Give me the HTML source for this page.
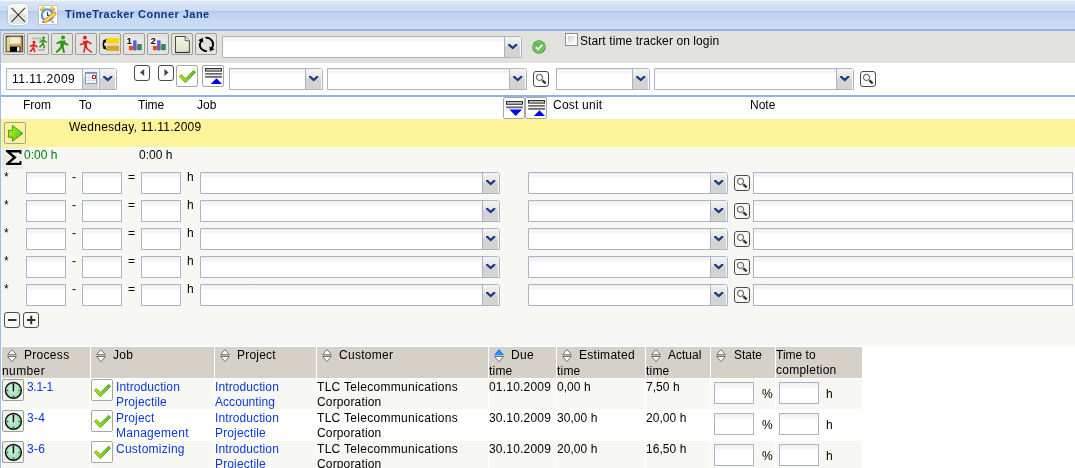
<!DOCTYPE html>
<html><head><meta charset="utf-8"><title>TimeTracker</title>
<style>
html,body{margin:0;padding:0;}
body{width:1075px;height:468px;overflow:hidden;position:relative;background:#fff;font-family:"Liberation Sans",sans-serif;font-size:12px;color:#000;}
.a{position:absolute;}
.t{position:absolute;white-space:nowrap;line-height:14px;height:14px;will-change:transform;}
.lk{color:#0a3adc;}
svg{position:absolute;overflow:visible;}
.btn{position:absolute;width:20px;height:20px;border:1px solid #9f9f9b;border-radius:2px;background:#e3e3df;}
.wbtn{position:absolute;width:20px;height:20px;border:1px solid #a6a6a2;border-radius:2px;background:#fff;}
.sbtn{position:absolute;width:14px;height:14px;border:1px solid #4a4a4a;border-radius:3px;background:#fff;}
.inp{position:absolute;height:22px;border:1px solid #aeb2c9;background:linear-gradient(#ececea 0,#f4f4f2 1px,#f5f5f3 4px,#fff 5px);box-sizing:border-box;}
.cmb{position:absolute;height:22px;border:1px solid #aeb2c9;background:linear-gradient(#ececea 0,#f4f4f2 1px,#f5f5f3 4px,#fff 5px);box-sizing:border-box;border-top-right-radius:3px;}
.cmb i{position:absolute;right:0;top:0;bottom:0;width:16px;border-left:1px solid #aeb2c9;border-top-right-radius:2px;box-shadow:inset -1px 0 0 #f8f8f7;background:linear-gradient(#f4f4f2 0,#e4e4e2 9px,#d2d2d0 10px,#d5d5d3 100%);}
.cmb i svg{left:2.8px;top:7px;}
.th{position:absolute;top:347px;height:31px;background:#d5d1c9;}
.r1{position:absolute;height:30px;background:#f7f7f3;}
</style></head><body>
<div class="a" style="left:0;top:0;width:1075px;height:29px;background:linear-gradient(#f1f6fc 0,#f1f6fc 1px,#dce7f7 1px,#d4e1f5 6px,#ccdcf3 11px,#a9c5eb 11px,#a9c5eb 12px,#b9d0ee 12px,#c8d9f2 21px,#cdddf3 29px);"></div>
<div class="a" style="left:0;top:29px;width:1075px;height:2px;background:#8fb5e6;"></div>
<div class="a" style="left:0;top:31px;width:1px;height:437px;background:#9dbdea;"></div>
<div class="a" style="left:1px;top:31px;width:1074px;height:32px;background:#e1e1dd;"></div>
<div class="a" style="left:1px;top:95px;width:1074px;height:2px;background:#8fb5e6;"></div>
<div class="a" style="left:1px;top:119px;width:1074px;height:28px;background:#fdf398;"></div>
<div class="a" style="left:1px;top:147px;width:1074px;height:199px;background:#f7f7f3;"></div>
<div class="a" style="left:8px;top:4px;width:18px;height:19px;border:1px solid #fcfcfc;border-radius:4px;background:linear-gradient(#f6f6f3 0,#f6f6f3 48%,#e3e3df 48%,#e3e3df 100%);box-shadow:0 0 0 1px rgba(160,180,210,.35);"><svg width="18" height="19" style="left:0;top:0"><path d="M2.5 2.8 L16 16.8 M16 2.8 L2.5 16.8" stroke="#333" stroke-width="1.1" fill="none"/></svg></div>
<div class="a" style="left:38px;top:5px;width:18px;height:18px;border:1px solid #c4c4c0;background:#fff;"><svg width="18" height="18" viewBox="0 0 18 18" style="left:0;top:0"><ellipse cx="3.5" cy="2.9" rx="2.9" ry="1.7" transform="rotate(-35 3.5 2.9)" fill="#f2b51c"/><ellipse cx="13.8" cy="2.7" rx="2.9" ry="1.7" transform="rotate(35 13.8 2.7)" fill="#f2b51c"/><path d="M2.2 3.2 L4.6 1.6 M12.8 1.6 L15 3.2" stroke="#fbe27a" stroke-width="0.8"/><circle cx="8.5" cy="9" r="6.7" fill="#4d8fdb"/><circle cx="8.5" cy="8.6" r="5.6" fill="#7ab2ec" opacity=".6"/><circle cx="8.3" cy="9" r="4.3" fill="#f6f9fd"/><path d="M8.5 6 V9.4 H10.8" stroke="#39445a" stroke-width="1.1" fill="none"/><path d="M3.2 16.6 L4.4 15 M14.2 16.6 L13 15" stroke="#666" stroke-width="1.1"/><path d="M6.4 14.9 L15.6 7.7" stroke="#e48f1a" stroke-width="4" stroke-linecap="round"/><path d="M6.6 14.7 L15.4 7.8" stroke="#fcd95a" stroke-width="2.2" stroke-linecap="round"/><path d="M7 14.2 L15 8" stroke="#fff4c0" stroke-width="0.7" stroke-dasharray="1.2 1"/><path d="M4.4 16.4 L5.2 13.6 L7.4 16 Z" fill="#f0c88c"/><path d="M4.2 16.6 L4.7 15.2 L5.8 16.3 Z" fill="#4a3018"/></svg></div>
<div class="t" style="left:65px;top:7px;font-weight:bold;font-size:11px;color:#0e3686;letter-spacing:0.45px;line-height:14px;">TimeTracker Conner Jane</div>
<div class="btn" style="left:3px;top:33px;"><svg width="17" height="17" viewBox="0 0 17 17" style="left:2px;top:2px;"><rect x="0.4" y="0.4" width="16.2" height="15.4" fill="#cda65c"/><rect x="0.4" y="0.4" width="3" height="15.4" fill="#e6cf96"/><rect x="14.2" y="0.4" width="2.4" height="15.4" fill="#b98f45"/><rect x="0.1" y="0.1" width="16.6" height="15.7" fill="none" stroke="#3f3522" stroke-width="0.9"/><rect x="0.4" y="0.2" width="16" height="0.9" fill="#2a2418"/><rect x="2.6" y="0.9" width="12.2" height="7.3" fill="#fbfaf0"/><rect x="3.4" y="0.9" width="11" height="7.1" fill="#f4efc6" stroke="#9a9a86" stroke-width="0.5"/><rect x="4" y="10.6" width="10.4" height="5.1" fill="#000"/><rect x="11.1" y="11.1" width="2.4" height="4.1" fill="#fff"/><rect x="0.8" y="14" width="1.4" height="1.4" fill="#f0b020"/><rect x="15" y="14" width="1.2" height="1.4" fill="#f09a20"/></svg></div>
<div class="btn" style="left:27px;top:33px;"><svg width="17" height="17" viewBox="0 0 17 17" style="left:2px;top:2px;"><path d="M1.9 2.4 H10.6 V4.8 M7.6 14 H13.7 V11" stroke="#b9b9b9" stroke-width="1.8" fill="none"/><g transform="translate(7.7,0.6) scale(0.66)" stroke="#3c9a1c" fill="none" stroke-width="2.5" stroke-linecap="round" stroke-linejoin="round"><circle cx="9" cy="1.8" r="2.1" fill="#3c9a1c" stroke="none"/><path d="M8.6 4.4 L8 10 M8.4 5.6 L3.6 8 M8.6 5.6 L13.2 8.4 M8 10 L6 13 L3.4 15.6 M8 10 L10 16"/></g><g transform="translate(-1.9,5.0) scale(0.66)" stroke="#e02424" fill="none" stroke-width="2.5" stroke-linecap="round" stroke-linejoin="round"><circle cx="9" cy="1.8" r="2.1" fill="#e02424" stroke="none"/><path d="M8.6 4.4 L8 10 M8.4 5.6 L3.6 8 M8.6 5.6 L13.2 8.4 M8 10 L6 13 L3.4 15.6 M8 10 L10 16"/></g></svg></div>
<div class="btn" style="left:51px;top:33px;"><svg width="17" height="17" viewBox="0 0 17 17" style="left:2px;top:2px;"><g stroke="#2f9612" fill="none" stroke-width="2" stroke-linecap="round" stroke-linejoin="round"><circle cx="9" cy="1.6" r="2" fill="#2f9612" stroke="none"/><path d="M6.6 5.2 L10.6 5 L9 10.6 L7.2 10.2 Z" fill="#2f9612" stroke-width="0.8"/><path d="M6.8 5.6 L3.4 7.2 M10.2 5.4 L11.2 8 L13.4 8.5 M7.8 10 L5.9 13 L2.8 15.7 M8.5 10 L9.9 16"/></g></svg></div>
<div class="btn" style="left:75px;top:33px;"><svg width="17" height="17" viewBox="0 0 17 17" style="left:2px;top:2px;"><g stroke="#e01c1c" fill="none" stroke-width="1.6" stroke-linecap="round" stroke-linejoin="round"><circle cx="6.9" cy="1.6" r="1.9" fill="#e01c1c" stroke="none"/><path d="M5.9 5.4 L9.5 5 L8.2 10 L7 10 Z" fill="#e01c1c" stroke-width="0.8"/><path d="M6 5.6 L5.3 7.8 L2.4 8.5 M9 5.2 L13 7.6 M7.4 9.4 L5.9 16.2 M7.9 9.6 L9.3 13 L13.4 16" stroke-width="1.5"/></g></svg></div>
<div class="btn" style="left:99px;top:33px;"><svg width="17" height="17" viewBox="0 0 17 17" style="left:2px;top:2px;"><rect x="4" y="1.2" width="13.2" height="14.1" fill="#dfe3ef"/><rect x="4.8" y="1.9" width="12.3" height="5.5" fill="#ffd700"/><rect x="4.8" y="9.7" width="12.3" height="5.2" fill="#daa520"/><path d="M2.2 5.6 Q0.2 8.4 2.2 11.2" stroke="#000" stroke-width="1.4" fill="none"/><path d="M0.4 4.9 L4.6 2.8 L3.4 7 Z M0.4 11.9 L4.6 14 L3.4 9.8 Z" fill="#000"/></svg></div>
<div class="btn" style="left:123px;top:33px;"><svg width="17" height="17" viewBox="0 0 17 17" style="left:2px;top:2px;"><rect x="1.5" y="1.5" width="15" height="14" fill="#eceef0" opacity=".55"/><rect x="2.9" y="9.9" width="4" height="4.4" fill="#ff4500"/><rect x="7.1" y="4.2" width="3.5" height="10.4" rx="0.8" fill="#6a5acd"/><rect x="11.1" y="8.1" width="4.7" height="6.2" rx="0.8" fill="#2e8b57"/><text x="0.4" y="7.7" font-family="Liberation Sans" font-weight="bold" font-size="9.6" fill="#000" stroke="#fff" stroke-width="1.8" paint-order="stroke">1</text></svg></div>
<div class="btn" style="left:147px;top:33px;"><svg width="17" height="17" viewBox="0 0 17 17" style="left:2px;top:2px;"><rect x="1.5" y="1.5" width="15" height="14" fill="#eceef0" opacity=".55"/><rect x="2.9" y="9.9" width="4" height="4.4" fill="#ff4500"/><rect x="7.1" y="4.2" width="3.5" height="10.4" rx="0.8" fill="#6a5acd"/><rect x="11.1" y="8.1" width="4.7" height="6.2" rx="0.8" fill="#2e8b57"/><text x="0.4" y="7.7" font-family="Liberation Sans" font-weight="bold" font-size="9.6" fill="#000" stroke="#fff" stroke-width="1.8" paint-order="stroke">2</text></svg></div>
<div class="btn" style="left:171px;top:33px;"><svg width="17" height="17" viewBox="0 0 17 17" style="left:2px;top:2px;"><defs><linearGradient id="gp" x1="0" y1="0" x2="0" y2="1"><stop offset="0" stop-color="#f5f5e8"/><stop offset="1" stop-color="#dfdfc6"/></linearGradient></defs><path d="M1.5 0.5 H11.2 L15.4 4.7 V16.4 H1.5 Z" fill="url(#gp)" stroke="#34382c" stroke-width="0.9"/><path d="M1.1 16.6 H15.8" stroke="#222" stroke-width="0.8"/><path d="M11.2 0.5 V4.7 H15.4" fill="#f8f8ea" stroke="#34382c" stroke-width="0.8"/></svg></div>
<div class="btn" style="left:195px;top:33px;"><svg width="17" height="17" viewBox="0 0 17 17" style="left:2px;top:2px;"><path d="M3.6 4.6 Q0.2 9 3.2 12.6 Q5.2 14.8 8.2 15.2" stroke="#000" stroke-width="1.9" fill="none" stroke-linecap="round"/><path d="M8.2 1.6 Q12 1.6 14.2 5 Q16 8.6 14 12" stroke="#000" stroke-width="1.9" fill="none" stroke-linecap="round"/><path d="M0.1 4.3 L4.8 1.8 L5.3 6.6 Z" fill="#000"/><path d="M11.4 10.5 L16.6 13.2 L11.9 15.3 Z" fill="#000"/></svg></div>
<div class="cmb" style="left:222px;top:36px;width:300px;"><i><svg width="10" height="6" viewBox="0 0 10 6"><path d="M0 0 H1.9 L4.7 2.5 L7.5 0 H9.4 V1.3 L4.7 5.4 L0 1.3 Z" fill="#1b3789"/></svg></i></div>
<svg width="14" height="14" viewBox="0 0 14 14" style="left:532px;top:40px;"><circle cx="7" cy="7" r="6.7" fill="#36a226"/><circle cx="7" cy="7" r="5.3" fill="#64ba54" stroke="#9fd893" stroke-width="0.8"/><path d="M3.9 7.2 L6.1 9.3 L10.2 4.9" stroke="#fff" stroke-width="1.9" fill="none"/></svg>
<div class="a" style="left:565px;top:33px;width:11px;height:11px;border:1px solid #8b8e92;background:linear-gradient(135deg,#cdd0d6 15%,#e6e7e9 50%,#f8f8f8 85%);box-shadow:inset 0 0 0 2px #fbfbfa;"></div>
<div class="t" style="left:580px;top:34px;letter-spacing:0.09px;">Start time tracker on login</div>
<div class="inp" style="left:6px;top:68px;width:111px;border-top-right-radius:3px;"></div>
<div class="t" style="left:11.5px;top:72px;letter-spacing:0.5px;">11.11.2009</div>
<div class="a" style="left:82px;top:69px;width:16px;height:20px;border-left:1px solid #aeb2c9;border-top-right-radius:2px;box-shadow:inset -1px 0 0 #fbfbfa;background:linear-gradient(#f4f4f2 0,#e4e4e2 9px,#d2d2d0 10px,#d5d5d3 100%);"></div>
<svg width="12" height="12" viewBox="0 0 12 12" style="left:85px;top:72px;"><rect x="0.5" y="0.5" width="11" height="11" fill="#fff" stroke="#7f9cc8" stroke-width="1"/><rect x="0" y="0" width="12" height="1.8" fill="#6a90cc"/><path d="M4 2.4 V11 M7.6 2.4 V11 M1 5.4 H11 M1 8.4 H11" stroke="#d0d4dc" stroke-width="0.9"/><circle cx="9" cy="5" r="1.7" fill="#fff" stroke="#a0141e" stroke-width="1.1"/></svg>
<div class="a" style="left:99px;top:69px;width:16px;height:20px;border-left:1px solid #aeb2c9;border-top-right-radius:2px;box-shadow:inset -1px 0 0 #f8f8f7;background:linear-gradient(#f4f4f2 0,#e4e4e2 9px,#d2d2d0 10px,#d5d5d3 100%);"><svg style="left:2.8px;top:7px" width="10" height="6" viewBox="0 0 10 6"><path d="M0 0 H1.9 L4.7 2.5 L7.5 0 H9.4 V1.3 L4.7 5.4 L0 1.3 Z" fill="#1b3789"/></svg></div>
<div class="sbtn" style="left:134px;top:65px;"><svg width="14" height="14" style="left:0;top:0"><path d="M9.2 3 V10 L5 6.5 Z" fill="#4a4a4a"/></svg></div>
<div class="sbtn" style="left:158px;top:65px;"><svg width="14" height="14" style="left:0;top:0"><path d="M5.4 3 V10 L9.6 6.5 Z" fill="#4a4a4a"/></svg></div>
<div class="wbtn" style="left:176px;top:65px;"><svg width="16" height="16" viewBox="0 0 16 16" style="left:2px;top:2px;"><defs><linearGradient id="gk" x1="0" y1="0" x2="1" y2="0"><stop offset="0" stop-color="#b6e404"/><stop offset="0.5" stop-color="#7fd022"/><stop offset="1" stop-color="#4fbe30"/></linearGradient></defs><path d="M0.3 8.4 L2.2 6.6 L6.4 10.4 L14.7 2.2 L16.7 4.2 L6.4 14.8 Z" fill="url(#gk)" stroke="#55a018" stroke-width="0.8" stroke-linejoin="round"/></svg></div>
<div class="wbtn" style="left:202px;top:65px;"><svg width="20" height="20" viewBox="0 0 20 20" style="left:0;top:0;"><rect x="2.5" y="2.5" width="16" height="2.6" fill="#c4c4c4" stroke="#2c2c2c" stroke-width="1"/><rect x="2.2" y="7" width="16.8" height="1.7" fill="#6a6a6a"/><rect x="2.2" y="9.9" width="16.8" height="1.9" fill="#6a6a6a"/><path d="M7.8 17.9 L13.5 12.3 L19 17.9 Z" fill="#0000ff"/></svg></div>
<div class="cmb" style="left:229px;top:68px;width:94px;"><i><svg width="10" height="6" viewBox="0 0 10 6"><path d="M0 0 H1.9 L4.7 2.5 L7.5 0 H9.4 V1.3 L4.7 5.4 L0 1.3 Z" fill="#1b3789"/></svg></i></div>
<div class="cmb" style="left:327px;top:68px;width:200px;"><i><svg width="10" height="6" viewBox="0 0 10 6"><path d="M0 0 H1.9 L4.7 2.5 L7.5 0 H9.4 V1.3 L4.7 5.4 L0 1.3 Z" fill="#1b3789"/></svg></i></div>
<div class="sbtn" style="left:533px;top:71px;background:#fff;"><svg width="14" height="14" viewBox="0 0 14 14" style="left:0;top:0"><circle cx="5.5" cy="5.4" r="3.1" fill="none" stroke="#444" stroke-width="1"/><path d="M8.3 8.3 L11.7 11.3" stroke="#333" stroke-width="2.3"/></svg></div>
<div class="cmb" style="left:556px;top:68px;width:94px;"><i><svg width="10" height="6" viewBox="0 0 10 6"><path d="M0 0 H1.9 L4.7 2.5 L7.5 0 H9.4 V1.3 L4.7 5.4 L0 1.3 Z" fill="#1b3789"/></svg></i></div>
<div class="cmb" style="left:654px;top:68px;width:200px;"><i><svg width="10" height="6" viewBox="0 0 10 6"><path d="M0 0 H1.9 L4.7 2.5 L7.5 0 H9.4 V1.3 L4.7 5.4 L0 1.3 Z" fill="#1b3789"/></svg></i></div>
<div class="sbtn" style="left:860px;top:71px;background:#fff;"><svg width="14" height="14" viewBox="0 0 14 14" style="left:0;top:0"><circle cx="5.5" cy="5.4" r="3.1" fill="none" stroke="#444" stroke-width="1"/><path d="M8.3 8.3 L11.7 11.3" stroke="#333" stroke-width="2.3"/></svg></div>
<div class="t" style="left:23px;top:98px;letter-spacing:0px;">From</div>
<div class="t" style="left:79px;top:98px;letter-spacing:0px;">To</div>
<div class="t" style="left:138px;top:98px;letter-spacing:0px;">Time</div>
<div class="t" style="left:197px;top:98px;letter-spacing:0px;">Job</div>
<div class="t" style="left:553px;top:98px;letter-spacing:0.22px;">Cost unit</div>
<div class="t" style="left:750px;top:98px;letter-spacing:0px;">Note</div>
<div class="wbtn" style="left:503px;top:97px;border-radius:2px;"><svg width="20" height="20" viewBox="0 0 20 20" style="left:0;top:0;"><rect x="2.5" y="3.5" width="16" height="2.8" fill="#c4c4c4" stroke="#2c2c2c" stroke-width="1"/><rect x="2.2" y="8.4" width="16.8" height="1.9" fill="#6a6a6a"/><path d="M5.4 11.4 H18 L11.7 18 Z" fill="#0000ff"/></svg></div>
<div class="wbtn" style="left:525px;top:97px;border-radius:2px;"><svg width="20" height="20" viewBox="0 0 20 20" style="left:0;top:0;"><rect x="2.5" y="2.5" width="16" height="2.6" fill="#c4c4c4" stroke="#2c2c2c" stroke-width="1"/><rect x="2.2" y="7" width="16.8" height="1.7" fill="#6a6a6a"/><rect x="2.2" y="9.9" width="16.8" height="1.9" fill="#6a6a6a"/><path d="M7.8 17.9 L13.5 12.3 L19 17.9 Z" fill="#0000ff"/></svg></div>
<div class="btn" style="left:4px;top:122px;background:#fdf398;border-color:#a2a2a6;"><svg width="17" height="17" viewBox="0 0 17 17" style="left:2px;top:2px;"><defs><linearGradient id="ga" x1="0" y1="0.3" x2="1" y2="0.7"><stop offset="0" stop-color="#b8ee1c"/><stop offset="1" stop-color="#4fc42a"/></linearGradient></defs><path d="M1.2 5.4 H5.4 V0.6 L15.9 8.4 L5.4 16.3 V12.2 H1.2 L1.6 8.8 Z" fill="url(#ga)" stroke="#2f8f1a" stroke-width="0.9" stroke-linejoin="round"/></svg></div>
<div class="t" style="left:68.5px;top:120px;letter-spacing:0.25px;">Wednesday, 11.11.2009</div>
<div class="a" style="left:2px;top:147px;width:21px;height:22px;background:#e9e9e6;"></div>
<svg width="22" height="22" viewBox="0 0 22 22" style="left:2px;top:147px;"><path id="sg" d="M3.8 3 H19.4 V7 H17.6 V5.5 H8.8 L14.8 10.5 L8.2 15.7 H17.6 V14.1 H19.4 V18 H3.8 V16.4 L10.8 10.6 L3.8 4.6 Z" fill="none" stroke="#fff" stroke-width="3.2" stroke-linejoin="round" opacity=".55"/><path d="M3.8 3 H19.4 V7 H17.6 V5.5 H8.8 L14.8 10.5 L8.2 15.7 H17.6 V14.1 H19.4 V18 H3.8 V16.4 L10.8 10.6 L3.8 4.6 Z" fill="#000"/></svg>
<div class="t" style="left:23.6px;top:148px;color:#008000;">0:00 h</div>
<div class="t" style="left:138.5px;top:148px;">0:00 h</div>
<div class="t" style="left:4px;top:170px;">*</div>
<div class="inp" style="left:26px;top:172px;width:40px;"></div>
<div class="t" style="left:71.5px;top:170px;">-</div>
<div class="inp" style="left:82px;top:172px;width:40px;"></div>
<div class="t" style="left:127.5px;top:170px;">=</div>
<div class="inp" style="left:141px;top:172px;width:40px;"></div>
<div class="t" style="left:187px;top:170px;">h</div>
<div class="cmb" style="left:200px;top:172px;width:300px;"><i><svg width="10" height="6" viewBox="0 0 10 6"><path d="M0 0 H1.9 L4.7 2.5 L7.5 0 H9.4 V1.3 L4.7 5.4 L0 1.3 Z" fill="#1b3789"/></svg></i></div>
<div class="cmb" style="left:528px;top:172px;width:200px;"><i><svg width="10" height="6" viewBox="0 0 10 6"><path d="M0 0 H1.9 L4.7 2.5 L7.5 0 H9.4 V1.3 L4.7 5.4 L0 1.3 Z" fill="#1b3789"/></svg></i></div>
<div class="sbtn" style="left:734px;top:175px;background:#f9f9f6;"><svg width="14" height="14" viewBox="0 0 14 14" style="left:0;top:0"><circle cx="5.5" cy="5.4" r="3.1" fill="none" stroke="#444" stroke-width="1"/><path d="M8.3 8.3 L11.7 11.3" stroke="#333" stroke-width="2.3"/></svg></div>
<div class="inp" style="left:753px;top:172px;width:320px;"></div>
<div class="t" style="left:4px;top:198px;">*</div>
<div class="inp" style="left:26px;top:200px;width:40px;"></div>
<div class="t" style="left:71.5px;top:198px;">-</div>
<div class="inp" style="left:82px;top:200px;width:40px;"></div>
<div class="t" style="left:127.5px;top:198px;">=</div>
<div class="inp" style="left:141px;top:200px;width:40px;"></div>
<div class="t" style="left:187px;top:198px;">h</div>
<div class="cmb" style="left:200px;top:200px;width:300px;"><i><svg width="10" height="6" viewBox="0 0 10 6"><path d="M0 0 H1.9 L4.7 2.5 L7.5 0 H9.4 V1.3 L4.7 5.4 L0 1.3 Z" fill="#1b3789"/></svg></i></div>
<div class="cmb" style="left:528px;top:200px;width:200px;"><i><svg width="10" height="6" viewBox="0 0 10 6"><path d="M0 0 H1.9 L4.7 2.5 L7.5 0 H9.4 V1.3 L4.7 5.4 L0 1.3 Z" fill="#1b3789"/></svg></i></div>
<div class="sbtn" style="left:734px;top:203px;background:#f9f9f6;"><svg width="14" height="14" viewBox="0 0 14 14" style="left:0;top:0"><circle cx="5.5" cy="5.4" r="3.1" fill="none" stroke="#444" stroke-width="1"/><path d="M8.3 8.3 L11.7 11.3" stroke="#333" stroke-width="2.3"/></svg></div>
<div class="inp" style="left:753px;top:200px;width:320px;"></div>
<div class="t" style="left:4px;top:226px;">*</div>
<div class="inp" style="left:26px;top:228px;width:40px;"></div>
<div class="t" style="left:71.5px;top:226px;">-</div>
<div class="inp" style="left:82px;top:228px;width:40px;"></div>
<div class="t" style="left:127.5px;top:226px;">=</div>
<div class="inp" style="left:141px;top:228px;width:40px;"></div>
<div class="t" style="left:187px;top:226px;">h</div>
<div class="cmb" style="left:200px;top:228px;width:300px;"><i><svg width="10" height="6" viewBox="0 0 10 6"><path d="M0 0 H1.9 L4.7 2.5 L7.5 0 H9.4 V1.3 L4.7 5.4 L0 1.3 Z" fill="#1b3789"/></svg></i></div>
<div class="cmb" style="left:528px;top:228px;width:200px;"><i><svg width="10" height="6" viewBox="0 0 10 6"><path d="M0 0 H1.9 L4.7 2.5 L7.5 0 H9.4 V1.3 L4.7 5.4 L0 1.3 Z" fill="#1b3789"/></svg></i></div>
<div class="sbtn" style="left:734px;top:231px;background:#f9f9f6;"><svg width="14" height="14" viewBox="0 0 14 14" style="left:0;top:0"><circle cx="5.5" cy="5.4" r="3.1" fill="none" stroke="#444" stroke-width="1"/><path d="M8.3 8.3 L11.7 11.3" stroke="#333" stroke-width="2.3"/></svg></div>
<div class="inp" style="left:753px;top:228px;width:320px;"></div>
<div class="t" style="left:4px;top:254px;">*</div>
<div class="inp" style="left:26px;top:256px;width:40px;"></div>
<div class="t" style="left:71.5px;top:254px;">-</div>
<div class="inp" style="left:82px;top:256px;width:40px;"></div>
<div class="t" style="left:127.5px;top:254px;">=</div>
<div class="inp" style="left:141px;top:256px;width:40px;"></div>
<div class="t" style="left:187px;top:254px;">h</div>
<div class="cmb" style="left:200px;top:256px;width:300px;"><i><svg width="10" height="6" viewBox="0 0 10 6"><path d="M0 0 H1.9 L4.7 2.5 L7.5 0 H9.4 V1.3 L4.7 5.4 L0 1.3 Z" fill="#1b3789"/></svg></i></div>
<div class="cmb" style="left:528px;top:256px;width:200px;"><i><svg width="10" height="6" viewBox="0 0 10 6"><path d="M0 0 H1.9 L4.7 2.5 L7.5 0 H9.4 V1.3 L4.7 5.4 L0 1.3 Z" fill="#1b3789"/></svg></i></div>
<div class="sbtn" style="left:734px;top:259px;background:#f9f9f6;"><svg width="14" height="14" viewBox="0 0 14 14" style="left:0;top:0"><circle cx="5.5" cy="5.4" r="3.1" fill="none" stroke="#444" stroke-width="1"/><path d="M8.3 8.3 L11.7 11.3" stroke="#333" stroke-width="2.3"/></svg></div>
<div class="inp" style="left:753px;top:256px;width:320px;"></div>
<div class="t" style="left:4px;top:282px;">*</div>
<div class="inp" style="left:26px;top:284px;width:40px;"></div>
<div class="t" style="left:71.5px;top:282px;">-</div>
<div class="inp" style="left:82px;top:284px;width:40px;"></div>
<div class="t" style="left:127.5px;top:282px;">=</div>
<div class="inp" style="left:141px;top:284px;width:40px;"></div>
<div class="t" style="left:187px;top:282px;">h</div>
<div class="cmb" style="left:200px;top:284px;width:300px;"><i><svg width="10" height="6" viewBox="0 0 10 6"><path d="M0 0 H1.9 L4.7 2.5 L7.5 0 H9.4 V1.3 L4.7 5.4 L0 1.3 Z" fill="#1b3789"/></svg></i></div>
<div class="cmb" style="left:528px;top:284px;width:200px;"><i><svg width="10" height="6" viewBox="0 0 10 6"><path d="M0 0 H1.9 L4.7 2.5 L7.5 0 H9.4 V1.3 L4.7 5.4 L0 1.3 Z" fill="#1b3789"/></svg></i></div>
<div class="sbtn" style="left:734px;top:287px;background:#f9f9f6;"><svg width="14" height="14" viewBox="0 0 14 14" style="left:0;top:0"><circle cx="5.5" cy="5.4" r="3.1" fill="none" stroke="#444" stroke-width="1"/><path d="M8.3 8.3 L11.7 11.3" stroke="#333" stroke-width="2.3"/></svg></div>
<div class="inp" style="left:753px;top:284px;width:320px;"></div>
<div class="sbtn" style="left:4px;top:312px;background:#f7f7f3;"><svg width="14" height="14" style="left:0;top:0"><rect x="3" y="6" width="8.4" height="2" fill="#333"/></svg></div>
<div class="sbtn" style="left:23px;top:312px;background:#f7f7f3;"><svg width="14" height="14" style="left:0;top:0"><rect x="3" y="6" width="8.4" height="2" fill="#333"/><rect x="6.2" y="2.8" width="2" height="8.4" fill="#333"/></svg></div>
<div class="th" style="left:2px;width:88px;"></div>
<svg width="10" height="13" viewBox="0 0 10 13" style="left:6.7px;top:349px;"><path d="M0.6 5.7 L5 0.6 L9.4 5.7 Z" fill="#fdfdfc" stroke="#737170" stroke-width="1"/><path d="M0.6 7.5 L5 12.6 L9.4 7.5 Z" fill="#fdfdfc" stroke="#737170" stroke-width="1"/></svg>
<div class="t" style="left:23.8px;top:348px;letter-spacing:0.3px;">Process</div>
<div class="t" style="left:2px;top:364px;letter-spacing:0.4px;">number</div>
<div class="th" style="left:91px;width:123px;"></div>
<svg width="10" height="13" viewBox="0 0 10 13" style="left:95.7px;top:349px;"><path d="M0.6 5.7 L5 0.6 L9.4 5.7 Z" fill="#fdfdfc" stroke="#737170" stroke-width="1"/><path d="M0.6 7.5 L5 12.6 L9.4 7.5 Z" fill="#fdfdfc" stroke="#737170" stroke-width="1"/></svg>
<div class="t" style="left:113.0px;top:348px;letter-spacing:0.28px;">Job</div>
<div class="th" style="left:215px;width:101px;"></div>
<svg width="10" height="13" viewBox="0 0 10 13" style="left:219.7px;top:349px;"><path d="M0.6 5.7 L5 0.6 L9.4 5.7 Z" fill="#fdfdfc" stroke="#737170" stroke-width="1"/><path d="M0.6 7.5 L5 12.6 L9.4 7.5 Z" fill="#fdfdfc" stroke="#737170" stroke-width="1"/></svg>
<div class="t" style="left:237.0px;top:348px;letter-spacing:0.2px;">Project</div>
<div class="th" style="left:317px;width:171px;"></div>
<svg width="10" height="13" viewBox="0 0 10 13" style="left:321.7px;top:349px;"><path d="M0.6 5.7 L5 0.6 L9.4 5.7 Z" fill="#fdfdfc" stroke="#737170" stroke-width="1"/><path d="M0.6 7.5 L5 12.6 L9.4 7.5 Z" fill="#fdfdfc" stroke="#737170" stroke-width="1"/></svg>
<div class="t" style="left:339.3px;top:348px;letter-spacing:0.28px;">Customer</div>
<div class="th" style="left:489px;width:67px;"></div>
<svg width="10" height="13" viewBox="0 0 10 13" style="left:493.7px;top:349px;"><path d="M0.6 5.7 L5 0.6 L9.4 5.7 Z" fill="#1e90ff" stroke="#1e88f4" stroke-width="1"/><path d="M0.6 7.5 L5 12.6 L9.4 7.5 Z" fill="#fdfdfc" stroke="#737170" stroke-width="1"/></svg>
<div class="t" style="left:511.0px;top:348px;letter-spacing:0.28px;">Due</div>
<div class="t" style="left:489px;top:364px;letter-spacing:0.2px;">time</div>
<div class="th" style="left:557px;width:88px;"></div>
<svg width="10" height="13" viewBox="0 0 10 13" style="left:561.7px;top:349px;"><path d="M0.6 5.7 L5 0.6 L9.4 5.7 Z" fill="#fdfdfc" stroke="#737170" stroke-width="1"/><path d="M0.6 7.5 L5 12.6 L9.4 7.5 Z" fill="#fdfdfc" stroke="#737170" stroke-width="1"/></svg>
<div class="t" style="left:579.0px;top:348px;letter-spacing:0.28px;">Estimated</div>
<div class="t" style="left:557px;top:364px;letter-spacing:0.2px;">time</div>
<div class="th" style="left:646px;width:64px;"></div>
<svg width="10" height="13" viewBox="0 0 10 13" style="left:650.7px;top:349px;"><path d="M0.6 5.7 L5 0.6 L9.4 5.7 Z" fill="#fdfdfc" stroke="#737170" stroke-width="1"/><path d="M0.6 7.5 L5 12.6 L9.4 7.5 Z" fill="#fdfdfc" stroke="#737170" stroke-width="1"/></svg>
<div class="t" style="left:668.0px;top:348px;letter-spacing:0px;">Actual</div>
<div class="t" style="left:646px;top:364px;letter-spacing:0.2px;">time</div>
<div class="th" style="left:711px;width:64px;"></div>
<svg width="10" height="13" viewBox="0 0 10 13" style="left:715.7px;top:349px;"><path d="M0.6 5.7 L5 0.6 L9.4 5.7 Z" fill="#fdfdfc" stroke="#737170" stroke-width="1"/><path d="M0.6 7.5 L5 12.6 L9.4 7.5 Z" fill="#fdfdfc" stroke="#737170" stroke-width="1"/></svg>
<div class="t" style="left:733.5px;top:348px;letter-spacing:0px;">State</div>
<div class="th" style="left:776px;width:86px;"></div>
<div class="t" style="left:776px;top:348px;">Time to</div>
<div class="t" style="left:776px;top:363px;letter-spacing:0.25px;">completion</div>
<div class="r1" style="left:2px;top:379px;height:30px;width:88px;"></div>
<div class="r1" style="left:91px;top:379px;height:30px;width:123px;"></div>
<div class="r1" style="left:215px;top:379px;height:30px;width:101px;"></div>
<div class="r1" style="left:317px;top:379px;height:30px;width:171px;"></div>
<div class="r1" style="left:489px;top:379px;height:30px;width:67px;"></div>
<div class="r1" style="left:557px;top:379px;height:30px;width:88px;"></div>
<div class="r1" style="left:646px;top:379px;height:30px;width:64px;"></div>
<div class="r1" style="left:711px;top:379px;height:30px;width:64px;"></div>
<div class="r1" style="left:776px;top:379px;height:30px;width:86px;"></div>
<div class="btn" style="left:2px;top:379px;background:#f1f1ed;"><svg width="20" height="20" viewBox="0 0 20 20" style="left:0;top:0;"><defs><radialGradient id="gc0" cx="0.45" cy="0.4" r="0.6"><stop offset="0" stop-color="#d8f4e0"/><stop offset="1" stop-color="#8fd8a4"/></radialGradient></defs><circle cx="10.4" cy="10.4" r="7.9" fill="url(#gc0)" stroke="#111" stroke-width="1.5"/><path d="M10.4 3.6 V11.4" stroke="#111" stroke-width="1.5"/><path d="M10.4 15.6 V17 M4 10.4 H5.2 M15.6 10.4 H16.8" stroke="#222" stroke-width="1"/></svg></div>
<div class="t lk" style="left:26.8px;top:380px;letter-spacing:-0.3px;">3.1-1</div>
<div class="wbtn" style="left:91px;top:379px;"><svg width="16" height="16" viewBox="0 0 16 16" style="left:2px;top:2px;"><defs><linearGradient id="gk" x1="0" y1="0" x2="1" y2="0"><stop offset="0" stop-color="#b6e404"/><stop offset="0.5" stop-color="#7fd022"/><stop offset="1" stop-color="#4fbe30"/></linearGradient></defs><path d="M0.3 8.4 L2.2 6.6 L6.4 10.4 L14.7 2.2 L16.7 4.2 L6.4 14.8 Z" fill="url(#gk)" stroke="#55a018" stroke-width="0.8" stroke-linejoin="round"/></svg></div>
<div class="t lk" style="left:116px;top:380px;letter-spacing:0.1px;">Introduction</div>
<div class="t lk" style="left:116px;top:395px;letter-spacing:0.15px;">Projectile</div>
<div class="t lk" style="left:215px;top:380px;letter-spacing:0.1px;">Introduction</div>
<div class="t lk" style="left:215px;top:395px;letter-spacing:0.05px;">Accounting</div>
<div class="t" style="left:317px;top:380px;letter-spacing:0.3px;">TLC Telecommunications</div>
<div class="t" style="left:317px;top:395px;letter-spacing:0.15px;">Corporation</div>
<div class="t" style="left:489px;top:380px;letter-spacing:0.2px;">01.10.2009</div>
<div class="t" style="left:557.4px;top:380px;letter-spacing:0.05px;">0,00 h</div>
<div class="t" style="left:646.4px;top:380px;letter-spacing:0.05px;">7,50 h</div>
<div class="inp" style="left:714px;top:382px;width:40px;"></div>
<div class="t" style="left:762px;top:387px;">%</div>
<div class="inp" style="left:779px;top:382px;width:40px;"></div>
<div class="t" style="left:826px;top:387px;">h</div>
<div class="btn" style="left:2px;top:410px;background:#f1f1ed;"><svg width="20" height="20" viewBox="0 0 20 20" style="left:0;top:0;"><defs><radialGradient id="gc1" cx="0.45" cy="0.4" r="0.6"><stop offset="0" stop-color="#d8f4e0"/><stop offset="1" stop-color="#8fd8a4"/></radialGradient></defs><circle cx="10.4" cy="10.4" r="7.9" fill="url(#gc1)" stroke="#111" stroke-width="1.5"/><path d="M10.4 3.6 V11.4" stroke="#111" stroke-width="1.5"/><path d="M10.4 15.6 V17 M4 10.4 H5.2 M15.6 10.4 H16.8" stroke="#222" stroke-width="1"/></svg></div>
<div class="t lk" style="left:27.3px;top:411px;letter-spacing:0.25px;">3-4</div>
<div class="wbtn" style="left:91px;top:410px;"><svg width="16" height="16" viewBox="0 0 16 16" style="left:2px;top:2px;"><defs><linearGradient id="gk" x1="0" y1="0" x2="1" y2="0"><stop offset="0" stop-color="#b6e404"/><stop offset="0.5" stop-color="#7fd022"/><stop offset="1" stop-color="#4fbe30"/></linearGradient></defs><path d="M0.3 8.4 L2.2 6.6 L6.4 10.4 L14.7 2.2 L16.7 4.2 L6.4 14.8 Z" fill="url(#gk)" stroke="#55a018" stroke-width="0.8" stroke-linejoin="round"/></svg></div>
<div class="t lk" style="left:116px;top:411px;letter-spacing:0.15px;">Project</div>
<div class="t lk" style="left:116px;top:426px;letter-spacing:0.27px;">Management</div>
<div class="t lk" style="left:215px;top:411px;letter-spacing:0.1px;">Introduction</div>
<div class="t lk" style="left:215px;top:426px;letter-spacing:0.15px;">Projectile</div>
<div class="t" style="left:317px;top:411px;letter-spacing:0.3px;">TLC Telecommunications</div>
<div class="t" style="left:317px;top:426px;letter-spacing:0.15px;">Corporation</div>
<div class="t" style="left:489px;top:411px;letter-spacing:0.2px;">30.10.2009</div>
<div class="t" style="left:557.4px;top:411px;letter-spacing:0.05px;">30,00 h</div>
<div class="t" style="left:646.4px;top:411px;letter-spacing:0.05px;">20,00 h</div>
<div class="inp" style="left:714px;top:413px;width:40px;"></div>
<div class="t" style="left:762px;top:418px;">%</div>
<div class="inp" style="left:779px;top:413px;width:40px;"></div>
<div class="t" style="left:826px;top:418px;">h</div>
<div class="r1" style="left:2px;top:441px;height:30px;width:88px;"></div>
<div class="r1" style="left:91px;top:441px;height:30px;width:123px;"></div>
<div class="r1" style="left:215px;top:441px;height:30px;width:101px;"></div>
<div class="r1" style="left:317px;top:441px;height:30px;width:171px;"></div>
<div class="r1" style="left:489px;top:441px;height:30px;width:67px;"></div>
<div class="r1" style="left:557px;top:441px;height:30px;width:88px;"></div>
<div class="r1" style="left:646px;top:441px;height:30px;width:64px;"></div>
<div class="r1" style="left:711px;top:441px;height:30px;width:64px;"></div>
<div class="r1" style="left:776px;top:441px;height:30px;width:86px;"></div>
<div class="btn" style="left:2px;top:441px;background:#f1f1ed;"><svg width="20" height="20" viewBox="0 0 20 20" style="left:0;top:0;"><defs><radialGradient id="gc2" cx="0.45" cy="0.4" r="0.6"><stop offset="0" stop-color="#d8f4e0"/><stop offset="1" stop-color="#8fd8a4"/></radialGradient></defs><circle cx="10.4" cy="10.4" r="7.9" fill="url(#gc2)" stroke="#111" stroke-width="1.5"/><path d="M10.4 3.6 V11.4" stroke="#111" stroke-width="1.5"/><path d="M10.4 15.6 V17 M4 10.4 H5.2 M15.6 10.4 H16.8" stroke="#222" stroke-width="1"/></svg></div>
<div class="t lk" style="left:27.3px;top:442px;letter-spacing:0.25px;">3-6</div>
<div class="wbtn" style="left:91px;top:441px;"><svg width="16" height="16" viewBox="0 0 16 16" style="left:2px;top:2px;"><defs><linearGradient id="gk" x1="0" y1="0" x2="1" y2="0"><stop offset="0" stop-color="#b6e404"/><stop offset="0.5" stop-color="#7fd022"/><stop offset="1" stop-color="#4fbe30"/></linearGradient></defs><path d="M0.3 8.4 L2.2 6.6 L6.4 10.4 L14.7 2.2 L16.7 4.2 L6.4 14.8 Z" fill="url(#gk)" stroke="#55a018" stroke-width="0.8" stroke-linejoin="round"/></svg></div>
<div class="t lk" style="left:116px;top:442px;letter-spacing:0.25px;">Customizing</div>
<div class="t lk" style="left:215px;top:442px;letter-spacing:0.1px;">Introduction</div>
<div class="t lk" style="left:215px;top:457px;letter-spacing:0.15px;">Projectile</div>
<div class="t" style="left:317px;top:442px;letter-spacing:0.3px;">TLC Telecommunications</div>
<div class="t" style="left:317px;top:457px;letter-spacing:0.15px;">Corporation</div>
<div class="t" style="left:489px;top:442px;letter-spacing:0.2px;">30.10.2009</div>
<div class="t" style="left:557.4px;top:442px;letter-spacing:0.05px;">20,00 h</div>
<div class="t" style="left:646.4px;top:442px;letter-spacing:0.05px;">16,50 h</div>
<div class="inp" style="left:714px;top:444px;width:40px;"></div>
<div class="t" style="left:762px;top:449px;">%</div>
<div class="inp" style="left:779px;top:444px;width:40px;"></div>
<div class="t" style="left:826px;top:449px;">h</div>
</body></html>
